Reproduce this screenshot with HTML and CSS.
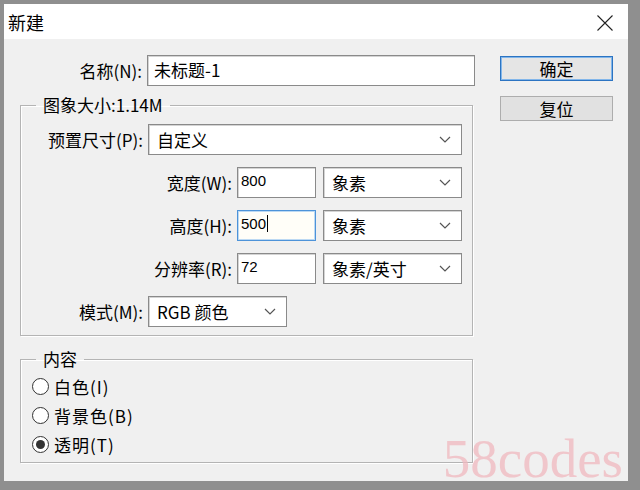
FILE: index.html
```html
<!DOCTYPE html>
<html lang="zh-CN">

<head>
  <meta charset="UTF-8">
  <meta name="viewport" content="width=device-width, initial-scale=1.0">
  <link rel="stylesheet" href="styles.css">
</head>

<body>
  <div class="window">
    <div class="titlebar">
      <span class="title">新建</span>
      <span class="close">
        <svg width="16" height="16" viewBox="0 0 16 16">
          <path d="M0.5 0.5 L15.5 15.5 M15.5 0.5 L0.5 15.5" stroke="#222" stroke-width="1.1" fill="none" />
        </svg>
      </span>
    </div>

    <div class="dialog">
      <div class="main">
        <div class="row">
          <label class="label">名称(N):</label>
          <div class="field name-field">未标题-1</div>
        </div>

        <fieldset class="group size-group">
          <legend>图象大小:1.14M</legend>
          <div class="row">
            <label class="label">预置尺寸(P):</label>
            <div class="select preset">自定义
              <svg class="chevron" width="12" height="7" viewBox="0 0 12 7"><path d="M1 1 L6 6 L11 1" /></svg>
            </div>
          </div>
          <div class="row">
            <label class="label wide">宽度(W):</label>
            <div class="field num">800</div>
            <div class="select unit">象素
              <svg class="chevron" width="12" height="7" viewBox="0 0 12 7"><path d="M1 1 L6 6 L11 1" /></svg>
            </div>
          </div>
          <div class="row">
            <label class="label wide">高度(H):</label>
            <div class="field num focus">500<span class="caret"></span></div>
            <div class="select unit">象素
              <svg class="chevron" width="12" height="7" viewBox="0 0 12 7"><path d="M1 1 L6 6 L11 1" /></svg>
            </div>
          </div>
          <div class="row">
            <label class="label wide">分辨率(R):</label>
            <div class="field num">72</div>
            <div class="select unit">象素/英寸
              <svg class="chevron" width="12" height="7" viewBox="0 0 12 7"><path d="M1 1 L6 6 L11 1" /></svg>
            </div>
          </div>
          <div class="row">
            <label class="label">模式(M):</label>
            <div class="select mode">RGB 颜色
              <svg class="chevron" width="12" height="7" viewBox="0 0 12 7"><path d="M1 1 L6 6 L11 1" /></svg>
            </div>
          </div>
        </fieldset>

        <fieldset class="group content-group">
          <legend>内容</legend>
          <label class="radio"><span class="dot"></span>白色(I)</label>
          <label class="radio"><span class="dot"></span>背景色(B)</label>
          <label class="radio"><span class="dot checked"></span>透明(T)</label>
        </fieldset>
      </div>

      <div class="buttons">
        <button class="btn btn-default" type="button">确定</button>
        <button class="btn" type="button">复位</button>
      </div>
    </div>

    <div class="watermark">58codes</div>
  </div>
</body>

</html>
```

FILE: styles.css
```css
body {
  margin: 0;
  background-color: #8f8f8f;
  font-family: "Noto Sans CJK SC", "Noto Sans", sans-serif;
  color: #000000;
}

.window {
  position: relative;
  width: 624px;
  height: 477px;
  margin: 4px 0 0 4px;
  background-color: #f0f0f0;
}

.titlebar {
  display: flex;
  align-items: center;
  justify-content: space-between;
  height: 35px;
  padding: 0 15px 0 4px;
  background-color: #ffffff;
}

.titlebar .title {
  font-size: 18px;
  line-height: 20px;
}

.titlebar .close {
  display: flex;
  margin-top: 2px;
}

.dialog {
  display: flex;
  padding: 16px 0 0 16px;
}

.main {
  width: 456px;
}

.row {
  display: flex;
  align-items: center;
  height: 31px;
}

.group .row + .row {
  margin-top: 12px;
}

.label {
  width: 122px;
  padding-right: 5px;
  font-size: 17px;
  text-align: right;
  white-space: nowrap;
}

.label.wide {
  width: 211px;
}

.field {
  box-sizing: border-box;
  height: 31px;
  border: 1px solid #8a8a8a;
  box-shadow: inset 1px 1px 0 #d4d4d4;
  background-color: #ffffff;
}

.name-field {
  width: 328px;
  padding-left: 6px;
  font-size: 17px;
  line-height: 28px;
}

.field.num {
  width: 79px;
  padding: 3px 0 0 3px;
  font-family: "Liberation Sans", Arial, sans-serif;
  font-size: 15px;
  line-height: 20px;
}

.field.num.focus {
  border-color: #4d93d9;
  box-shadow: inset 0 0 0 1px #bcd9f3;
  background-color: #fffef8;
}

.caret {
  display: inline-block;
  width: 1px;
  height: 17px;
  margin-left: 1px;
  vertical-align: -3px;
  background-color: #000000;
}

.select {
  box-sizing: border-box;
  display: flex;
  align-items: center;
  justify-content: space-between;
  height: 31px;
  padding: 0 10px 0 8px;
  border: 1px solid #8a8a8a;
  box-shadow: inset 1px 1px 0 #d4d4d4;
  background-color: #ffffff;
  font-size: 17px;
  white-space: nowrap;
}

.select .chevron path {
  fill: none;
  stroke: #555555;
  stroke-width: 1.2;
}

.select.preset {
  width: 314px;
}

.select.unit {
  width: 139px;
  margin-left: 7px;
}

.select.mode {
  width: 139px;
}

.group {
  width: 453px;
  box-sizing: border-box;
  min-width: 0;
  margin: 9px 0 0 0;
  padding: 9px 0 8px 0;
  border: 1px solid #b4b4b4;
  box-shadow: 1px 1px 0 #ffffff, inset 1px 1px 0 #ffffff;
}

.group legend {
  margin-left: 15px;
  padding: 0 7px;
  font-size: 17px;
  line-height: 20px;
}

.content-group {
  margin-top: 13px;
  padding: 3px 0 3px 0;
}

.radio {
  display: flex;
  align-items: center;
  height: 29px;
  padding-left: 11px;
  font-size: 17px;
  letter-spacing: 1px;
}

.radio .dot {
  box-sizing: border-box;
  display: flex;
  align-items: center;
  justify-content: center;
  width: 17px;
  height: 17px;
  margin-right: 5px;
  border: 1px solid #333333;
  border-radius: 50%;
  background-color: #ffffff;
}

.radio .dot.checked::after {
  content: "";
  width: 9px;
  height: 9px;
  border-radius: 50%;
  background-color: #333333;
}

.buttons {
  display: flex;
  flex-direction: column;
  margin: 1px 0 0 24px;
}

.btn {
  box-sizing: border-box;
  width: 113px;
  height: 25px;
  padding: 0;
  border: 1px solid #adadad;
  background-color: #e1e1e1;
  font-family: "Noto Sans CJK SC", sans-serif;
  font-size: 17px;
  line-height: 20px;
  color: #000000;
}

.btn + .btn {
  margin-top: 15px;
}

.btn.btn-default {
  border-color: #2c74c2;
  box-shadow: inset 0 0 0 1px #82b6ea;
  background-color: #e5e5e5;
}

.watermark {
  position: absolute;
  top: 427px;
  right: 5px;
  font-family: "Liberation Serif", "Times New Roman", serif;
  font-size: 55px;
  line-height: 55px;
  color: #f0b9bf;
  opacity: 0.75;
}
```
